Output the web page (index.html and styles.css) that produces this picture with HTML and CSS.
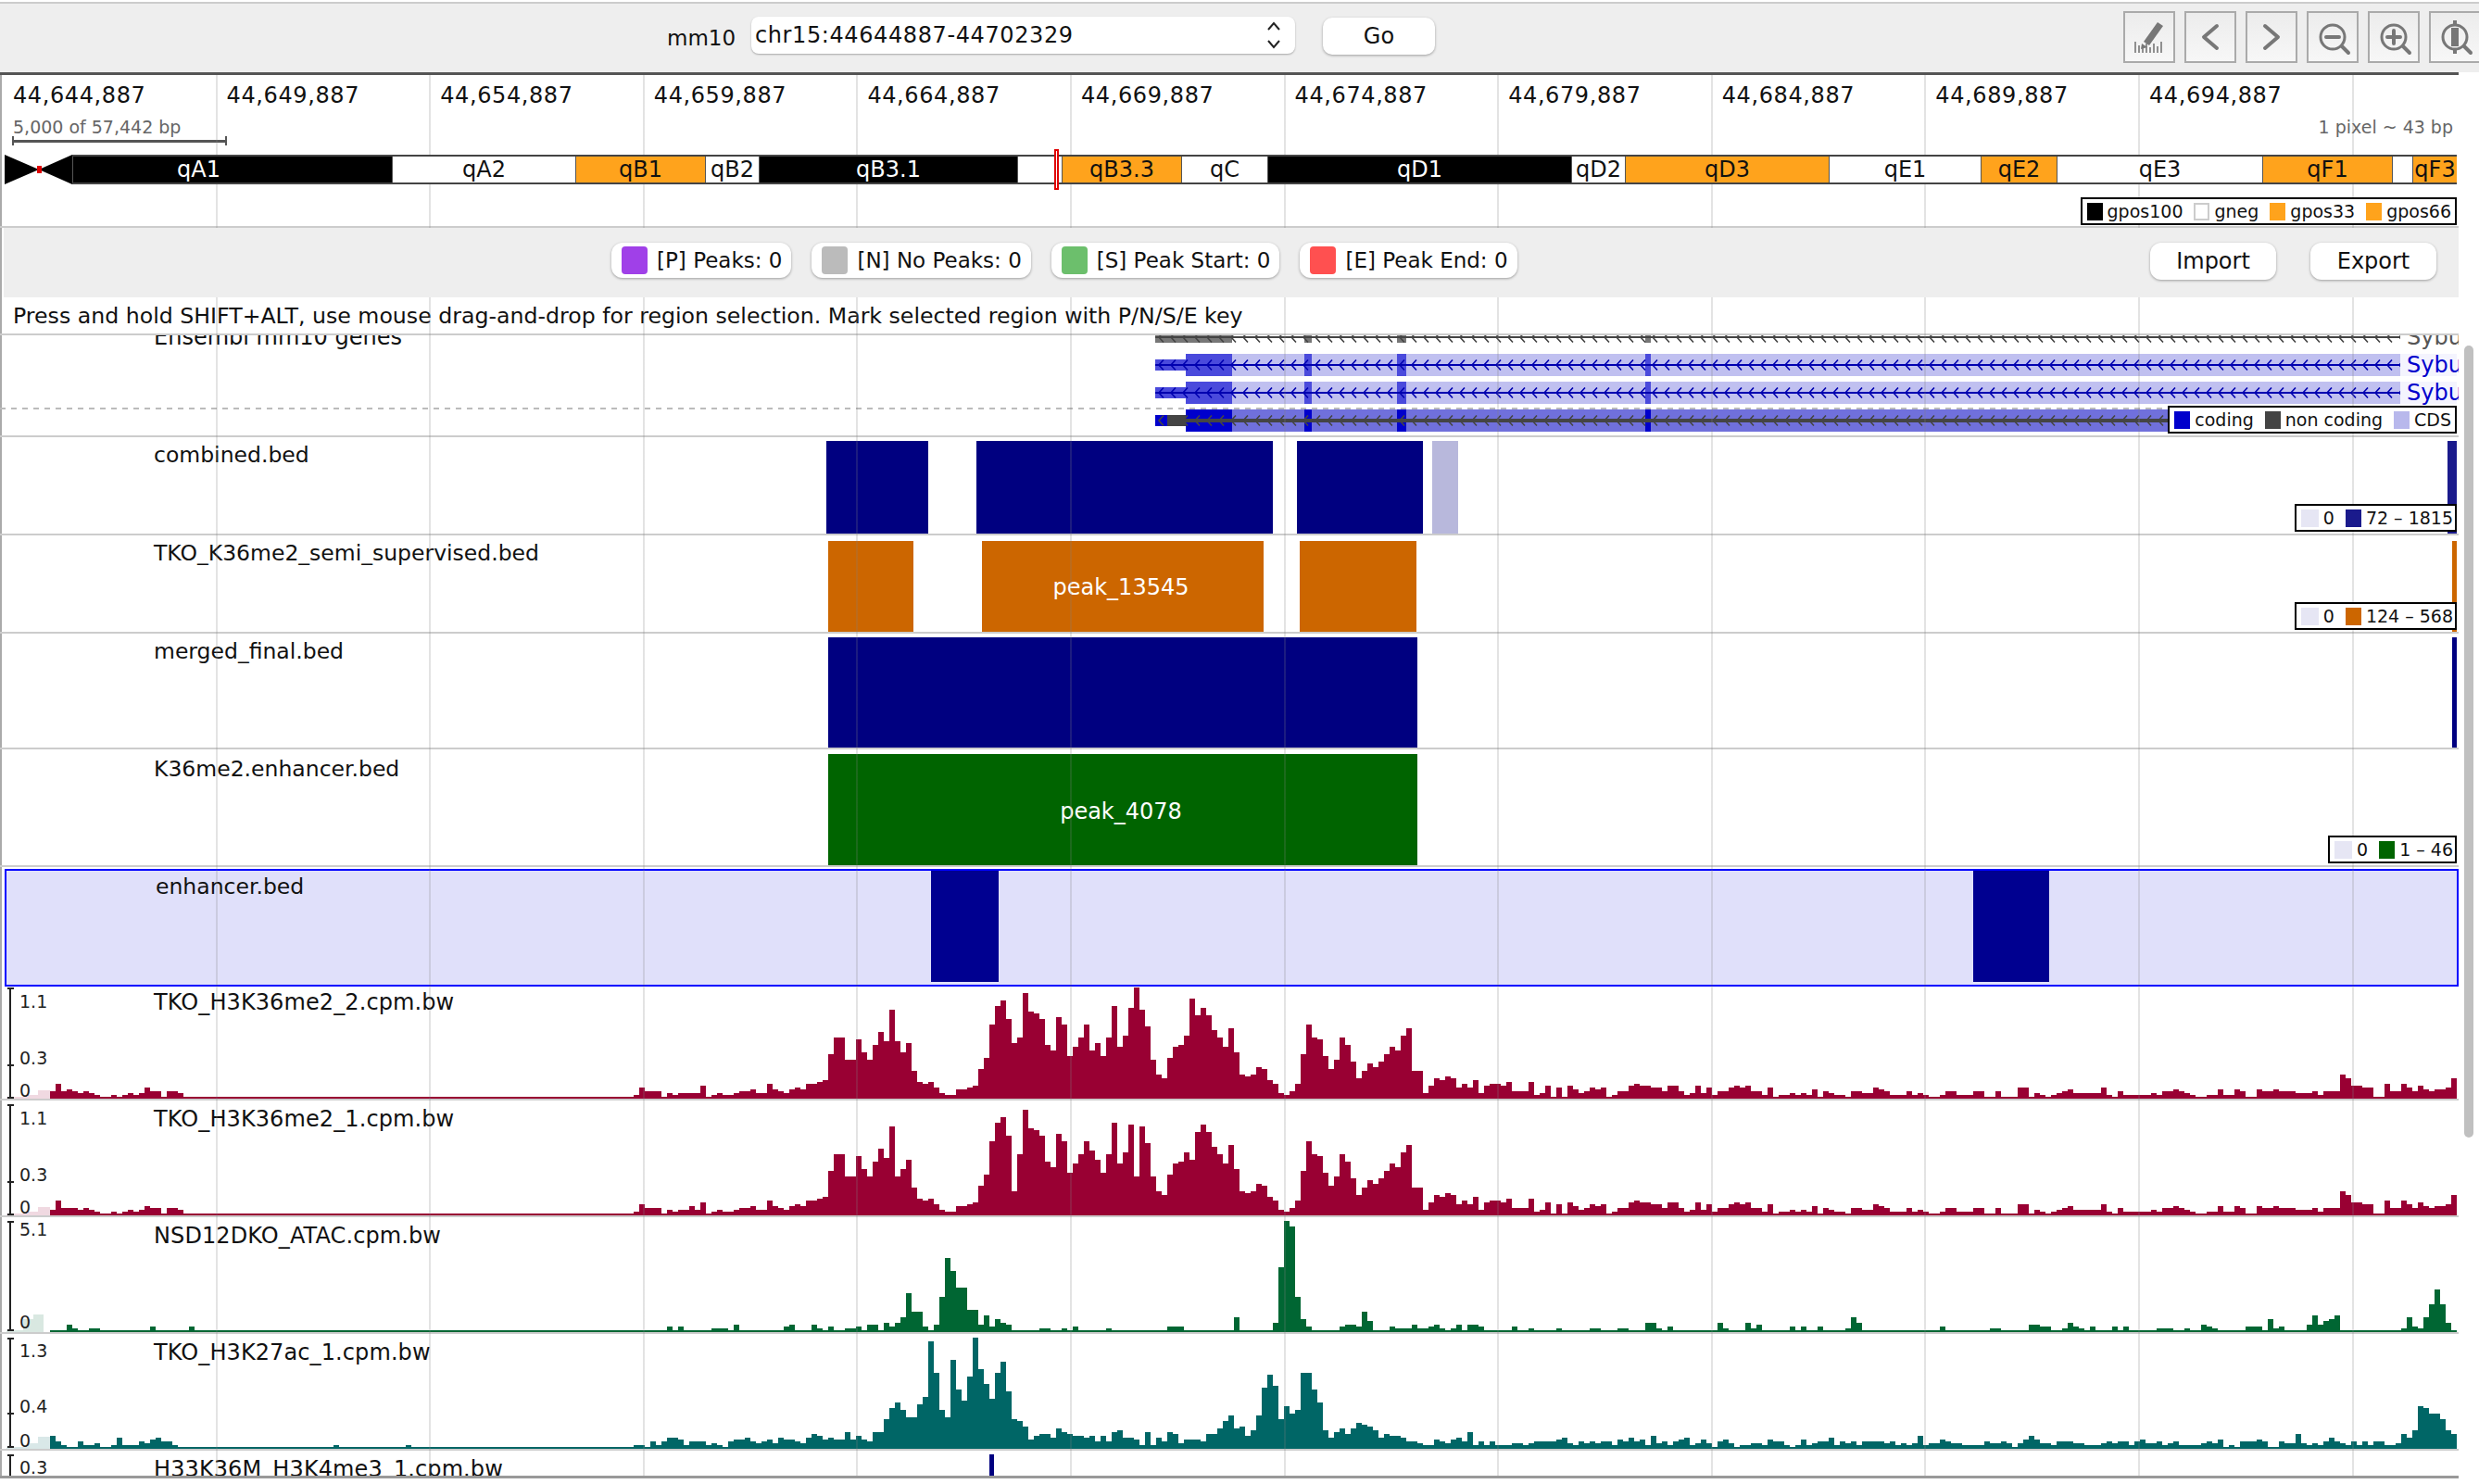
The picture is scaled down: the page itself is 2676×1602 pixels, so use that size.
FILE: index.html
```html
<!DOCTYPE html>
<html lang="en">
<head>
  <meta charset="UTF-8" />
  <title>IGV mm10 chr15</title>
  <link rel="stylesheet" href="styles.css">
</head>
<body>
  <header class="toolbar">
    <span class="genome-name">mm10</span>
    <div class="locus">
      <span>chr15:44644887-44702329</span>
      <svg class="stepper" width="18" height="32" viewBox="0 0 18 32"><path d="M3 10 L9 3 L15 10 M3 22 L9 29 L15 22"/></svg>
    </div>
    <button class="btn go">Go</button>
    <nav class="nav">
      <button class="icon-btn"><svg viewBox="0 0 52 52"><path class="fill" d="M20 31 L35 10 L41 14 L26 35 Z M18 33 L24 37 L17 39 Z"/><path class="thin" d="M11 31 V43 M15 35 V43 M19 36 V43 M23 33 V43 M27 37 V43 M31 33 V43 M35 36 V43 M39 31 V43"/></svg></button>
      <button class="icon-btn"><svg viewBox="0 0 52 52"><path class="line" d="M33 14 L19 26 L33 38"/></svg></button>
      <button class="icon-btn"><svg viewBox="0 0 52 52"><path class="line" d="M19 14 L33 26 L19 38"/></svg></button>
      <button class="icon-btn"><svg viewBox="0 0 52 52"><circle class="ring" cx="26" cy="26" r="13"/><path class="line" d="M19 26 H33 M36 36 L43 43"/></svg></button>
      <button class="icon-btn"><svg viewBox="0 0 52 52"><circle class="ring" cx="26" cy="26" r="13"/><path class="line" d="M19 26 H33 M26 19 V33 M36 36 L43 43"/></svg></button>
      <button class="icon-btn"><svg viewBox="0 0 52 52"><circle class="ring" cx="26" cy="26" r="13"/><path class="line" d="M36 36 L43 43"/><rect class="fill" x="22" y="16" width="8" height="20"/><rect class="fill" x="24" y="8" width="4" height="4"/><rect class="fill" x="24" y="40" width="4" height="4"/></svg></button>
    </nav>
  </header>

  <main class="browser">
    <div class="gridlines"></div>

    <section class="genome">
      <div class="ruler">
        <span>44,644,887</span><span>44,649,887</span><span>44,654,887</span><span>44,659,887</span>
        <span>44,664,887</span><span>44,669,887</span><span>44,674,887</span><span>44,679,887</span>
        <span>44,684,887</span><span>44,689,887</span><span>44,694,887</span>
      </div>
      <div class="scale-row">
        <div class="scale">
          <span>5,000 of 57,442 bp</span>
          <div class="scalebar"></div>
        </div>
        <span>1 pixel ~ 43 bp</span>
      </div>
      <div class="ideogram">
        <svg class="centromere" width="73" height="32" viewBox="0 0 73 32"><path d="M0 0 L37 16 L0 32 Z M73 0 L37 16 L73 32 Z"/><rect class="cen-mark" x="35" y="12" width="5" height="8"/></svg>
        <div class="bands">
          <span class="band black first" style="width:345px">qA1</span>
          <span class="band" style="width:198px">qA2</span>
          <span class="band orange" style="width:140px">qB1</span>
          <span class="band" style="width:58px">qB2</span>
          <span class="band black" style="width:279px">qB3.1</span>
          <span class="band" style="width:48px"></span>
          <span class="band orange" style="width:129px">qB3.3</span>
          <span class="band" style="width:93px">qC</span>
          <span class="band black" style="width:328px">qD1</span>
          <span class="band" style="width:58px">qD2</span>
          <span class="band orange" style="width:220px">qD3</span>
          <span class="band" style="width:164px">qE1</span>
          <span class="band orange" style="width:82px">qE2</span>
          <span class="band" style="width:222px">qE3</span>
          <span class="band orange" style="width:140px">qF1</span>
          <span class="band" style="width:22px"></span>
          <span class="band orange" style="width:48px">qF3</span>
        </div>
        <div class="locator"></div>
      </div>
      <div class="legend legend-ideo">
        <i class="swatch sw-black"></i>gpos100
        <i class="swatch sw-white"></i>gneg
        <i class="swatch sw-orange"></i>gpos33
        <i class="swatch sw-orange"></i>gpos66
      </div>
    </section>

    <section class="marks">
      <button class="btn mark"><i class="dot purple"></i>[P] Peaks: 0</button>
      <button class="btn mark"><i class="dot grey"></i>[N] No Peaks: 0</button>
      <button class="btn mark"><i class="dot green"></i>[S] Peak Start: 0</button>
      <button class="btn mark"><i class="dot red"></i>[E] Peak End: 0</button>
      <button class="btn file import">Import</button>
      <button class="btn file">Export</button>
    </section>

    <div class="hint">Press and hold SHIFT+ALT, use mouse drag-and-drop for region selection. Mark selected region with P/N/S/E key</div>

    <!-- genes -->
    <section class="track genes">
      <div class="track-label gene-label">Ensembl mm10 genes</div>
      <svg width="2654" height="108" viewBox="0 0 2654 108">
        <defs>
          <pattern id="chev-grey" width="13" height="12" y="-6" patternUnits="userSpaceOnUse"><path class="chev" stroke="#444" d="M8 0.5 L3 6 L8 11.5"/></pattern>
          <pattern id="chev-blue" width="13" height="12" y="-6" patternUnits="userSpaceOnUse"><path class="chev" stroke="#0000b0" d="M8 0.5 L3 6 L8 11.5"/></pattern>
        </defs>
        <path class="dashed" d="M0 79 H2340"/>

        <g transform="translate(0,2)" fill="#777">
          <rect x="1247" y="-6" width="83" height="12"/>
          <rect x="1408" y="-6" width="8" height="12"/><rect x="1508" y="-6" width="10" height="12"/><rect x="1776" y="-6" width="6" height="12"/>
          <rect x="1247" y="-1" width="1344" height="2" fill="#444"/>
          <rect x="1247" y="-6" width="1344" height="12" fill="url(#chev-grey)"/>
          <text class="gene-name" x="2598" y="8" fill="#555">Sybu</text>
        </g>

        <g transform="translate(0,32)" fill="#4a4adc">
          <rect x="2591" y="-12" width="61" height="24" fill="#f4f4fe"/>
          <rect x="1330" y="-12" width="1261" height="24" fill="#c0c0f0"/>
          <rect x="1247" y="-6" width="33" height="12"/>
          <rect x="1280" y="-12" width="50" height="24"/>
          <rect x="1408" y="-12" width="8" height="24"/><rect x="1508" y="-12" width="10" height="24"/><rect x="1776" y="-12" width="6" height="24"/>
          <rect x="1247" y="-1" width="1344" height="2" fill="#0000b0"/>
          <rect x="1247" y="-6" width="1344" height="12" fill="url(#chev-blue)"/>
          <text class="gene-name" x="2598" y="8" fill="#0000cc">Sybu</text>
        </g>

        <g transform="translate(0,62)" fill="#4a4adc">
          <rect x="2591" y="-12" width="61" height="24" fill="#f4f4fe"/>
          <rect x="1330" y="-12" width="1261" height="24" fill="#c0c0f0"/>
          <rect x="1247" y="-6" width="33" height="12"/>
          <rect x="1280" y="-12" width="50" height="24"/>
          <rect x="1408" y="-12" width="8" height="24"/><rect x="1508" y="-12" width="10" height="24"/><rect x="1776" y="-12" width="6" height="24"/>
          <rect x="1247" y="-1" width="1344" height="2" fill="#0000b0"/>
          <rect x="1247" y="-6" width="1344" height="12" fill="url(#chev-blue)"/>
          <text class="gene-name" x="2598" y="8" fill="#0000cc">Sybu</text>
        </g>

        <g transform="translate(0,92)" fill="#0000cc">
          <rect x="1330" y="-12" width="1261" height="24" fill="#7070dc"/>
          <rect x="1247" y="-6" width="33" height="12"/>
          <rect x="1260" y="-6" width="20" height="12" fill="#444"/>
          <rect x="1280" y="-12" width="50" height="24"/>
          <rect x="1408" y="-12" width="8" height="24"/><rect x="1508" y="-12" width="10" height="24"/><rect x="1776" y="-12" width="6" height="24"/>
          <rect x="1260" y="-2" width="1331" height="4" fill="#444"/>
          <rect x="1247" y="-6" width="1344" height="12" fill="url(#chev-grey)"/>
        </g>
      </svg>
      <div class="legend legend-gene">
        <i class="swatch sw-coding"></i>coding
        <i class="swatch sw-noncoding"></i>non coding
        <i class="swatch sw-cds"></i>CDS
      </div>
    </section>

    <!-- bed tracks -->
    <section class="track bed combined">
      <div class="track-label">combined.bed</div>
      <svg width="2654" height="104" viewBox="0 0 2654 104" fill="#000080">
        <rect x="892" y="4" width="110" height="100"/>
        <rect x="1054" y="4" width="320" height="100"/>
        <rect x="1400" y="4" width="136" height="100"/>
        <rect x="1546" y="4" width="28" height="100" fill="#b8b8dc"/>
        <rect x="2642" y="4" width="10" height="100" fill="#1a1a8c"/>
      </svg>
      <div class="legend legend-bed">
        <i class="swatch sw-zero"></i>0
        <i class="swatch sw-navy"></i>72 – 1815
      </div>
    </section>

    <section class="track bed semi">
      <div class="track-label">TKO_K36me2_semi_supervised.bed</div>
      <svg width="2654" height="104" viewBox="0 0 2654 104" fill="#cc6600">
        <rect x="894" y="6" width="92" height="98"/>
        <rect x="1060" y="6" width="304" height="98"/>
        <rect x="1403" y="6" width="126" height="98"/>
        <rect x="2647" y="6" width="5" height="98"/>
        <text class="peak-name" x="1210" y="64">peak_13545</text>
      </svg>
      <div class="legend legend-bed">
        <i class="swatch sw-zero"></i>0
        <i class="swatch sw-orange-dark"></i>124 – 568
      </div>
    </section>

    <section class="track bed merged">
      <div class="track-label">merged_final.bed</div>
      <svg width="2654" height="123" viewBox="0 0 2654 123" fill="#000080">
        <rect x="894" y="4" width="636" height="119"/>
        <rect x="2647" y="4" width="5" height="119"/>
      </svg>
    </section>

    <section class="track bed k36-enh">
      <div class="track-label">K36me2.enhancer.bed</div>
      <svg width="2654" height="125" viewBox="0 0 2654 125" fill="#006400">
        <rect x="894" y="5" width="636" height="120"/>
        <text class="peak-name" x="1210" y="75">peak_4078</text>
      </svg>
      <div class="legend legend-bed">
        <i class="swatch sw-zero"></i>0
        <i class="swatch sw-green"></i>1 – 46
      </div>
    </section>

    <section class="track bed enhancer">
      <div class="track-label">enhancer.bed</div>
      <svg width="2649" height="123" viewBox="0 0 2649 123" fill="#000090">
        <rect x="998" y="0" width="73" height="120"/>
        <rect x="2123" y="0" width="82" height="120"/>
      </svg>
    </section>

    <!-- wig tracks, bars are filled in by tracks.js -->
    <section class="track wig">
      <div class="track-label">TKO_H3K36me2_2.cpm.bw</div>
      <svg width="2654" height="120" viewBox="0 0 2654 120">
        <path class="pale c-maroon" d="M41 120 V111 H54 V120 Z M30 120 V116 H41 V120 Z M7 120 V118 H30 V120 Z"/>
        <path class="bars c-maroon" data-track="h3k36_2"/>
        <path class="axis" d="M8 1 H15 M11 1 V119 M8 119 H15 M8 84 H15"/>
        <text class="ticks" x="21" y="22">1.1</text><text class="ticks" x="21" y="83">0.3</text><text class="ticks" x="21" y="118">0</text>
      </svg>
    </section>

    <section class="track wig">
      <div class="track-label">TKO_H3K36me2_1.cpm.bw</div>
      <svg width="2654" height="120" viewBox="0 0 2654 120">
        <path class="pale c-maroon" d="M41 120 V111 H54 V120 Z M30 120 V116 H41 V120 Z M7 120 V118 H30 V120 Z"/>
        <path class="bars c-maroon" data-track="h3k36_1"/>
        <path class="axis" d="M8 1 H15 M11 1 V119 M8 119 H15 M8 84 H15"/>
        <text class="ticks" x="21" y="22">1.1</text><text class="ticks" x="21" y="83">0.3</text><text class="ticks" x="21" y="118">0</text>
      </svg>
    </section>

    <section class="track wig">
      <div class="track-label">NSD12DKO_ATAC.cpm.bw</div>
      <svg width="2654" height="120" viewBox="0 0 2654 120">
        <path class="pale c-green" d="M36 120 V101 H47 V120 Z M25 120 V106 H36 V120 Z M7 120 V118 H25 V120 Z"/>
        <path class="bars c-green" data-track="atac"/>
        <path class="axis" d="M8 1 H15 M11 1 V118 M8 118 H15"/>
        <text class="ticks" x="21" y="16">5.1</text><text class="ticks" x="21" y="116">0</text>
      </svg>
    </section>

    <section class="track wig">
      <div class="track-label">TKO_H3K27ac_1.cpm.bw</div>
      <svg width="2654" height="120" viewBox="0 0 2654 120">
        <path class="pale c-teal" d="M41 120 V107 H54 V120 Z M30 120 V114 H41 V120 Z M7 120 V118 H30 V120 Z"/>
        <path class="bars c-teal" data-track="h3k27"/>
        <path class="axis" d="M8 1 H15 M11 1 V118 M8 118 H15 M8 82 H15"/>
        <text class="ticks" x="21" y="21">1.3</text><text class="ticks" x="21" y="81">0.4</text><text class="ticks" x="21" y="118">0</text>
      </svg>
    </section>

    <section class="track wig last">
      <div class="track-label">H33K36M_H3K4me3_1.cpm.bw</div>
      <svg width="2654" height="23" viewBox="0 0 2654 23">
        <rect x="1068" y="0" width="5" height="23" fill="#000080"/>
        <path class="axis" d="M8 1 H15 M11 1 V23"/>
        <text class="ticks" x="21" y="21">0.3</text>
      </svg>
    </section>
  </main>

  <div class="scrollbar"></div>

  <script src="tracks.js"></script>
</body>
</html>
```

FILE: styles.css
```css
* { margin: 0; padding: 0; box-sizing: border-box; }
html, body { height: 100%; overflow: hidden; }
body {
  font-family: "DejaVu Sans", sans-serif;
  font-size: 24px;
  background-color: #fff;
  color: #111;
  position: relative;
}
button { font-family: inherit; font-size: inherit; color: inherit; border: none; }
svg { display: block; }

/* top bar */
.toolbar {
  margin-top: 2px;
  height: 76px;
  border-top: 2px solid #ccc;
  background-color: #eee;
  display: flex;
  align-items: center;
  overflow: hidden;
}
.genome-name { margin-left: 720px; width: 91px; font-size: 23px; }
.locus {
  width: 587px;
  height: 40px;
  margin-bottom: 6px;
  padding: 0 14px 0 4px;
  background-color: #fff;
  border-radius: 8px;
  box-shadow: 0 1px 2px rgba(0, 0, 0, 0.3);
  display: flex;
  align-items: center;
  justify-content: space-between;
  letter-spacing: 0.6px;
}
.stepper path { fill: none; stroke: #222; stroke-width: 2; }
.btn {
  background-color: #fff;
  border-radius: 10px;
  box-shadow: 0 1px 3px rgba(0, 0, 0, 0.35);
}
.go { width: 121px; height: 40px; margin-left: 30px; margin-bottom: 4px; }
.nav { margin-left: auto; margin-right: -2px; display: flex; gap: 10px; flex-shrink: 0; margin-bottom: 2px; }
.icon-btn {
  width: 56px;
  height: 56px;
  border: 2px solid #aaa;
  background: linear-gradient(#ececec, #f7f7f7);
  flex-shrink: 0;
}
.icon-btn svg { width: 52px; height: 52px; }
.icon-btn .fill { fill: #777; }
.icon-btn .thin { fill: none; stroke: #777; stroke-width: 1.6; }
.icon-btn .line { fill: none; stroke: #777; stroke-width: 4; stroke-linecap: round; stroke-linejoin: round; }
.icon-btn .ring { fill: none; stroke: #777; stroke-width: 3; }

/* main panel */
.browser {
  position: relative;
  width: 2654px;
  height: 1518px;
  border-top: 3px solid #555;
  border-bottom: 3px solid #999;
  box-shadow: inset 2px 0 #aaa;
  overflow: hidden;
}
.gridlines {
  position: absolute;
  top: 0;
  bottom: 0;
  left: 4px;
  right: 0;
  z-index: 1;
  pointer-events: none;
  background-image: repeating-linear-gradient(to right,
    transparent 0, transparent 228.6px,
    rgba(128, 128, 128, 0.22) 228.6px, rgba(128, 128, 128, 0.22) 230.6px);
}

.genome { height: 165px; position: relative; border-bottom: 2px solid #ccc; }
.ruler { display: flex; padding: 8px 0 0 14px; line-height: 28px; letter-spacing: 0.6px; }
.ruler span { width: 230.6px; flex-shrink: 0; }
.scale-row {
  display: flex;
  justify-content: space-between;
  padding: 8px 6px 0 14px;
  font-size: 19px;
  line-height: 24px;
  color: #666;
}
.scalebar {
  width: 232px;
  height: 10px;
  margin: -2px 0 0 -1px;
  border-left: 2px solid #555;
  border-right: 2px solid #555;
  background: linear-gradient(#555, #555) center / 100% 3px no-repeat;
}
.ideogram {
  position: relative;
  z-index: 2;
  display: flex;
  height: 32px;
  margin: 10px 0 0 5px;
  width: 2647px;
}
.centromere { flex-shrink: 0; }
.centromere path { fill: #000; }
.cen-mark { fill: #e00000; }
.bands {
  flex: 1;
  display: flex;
  border-top: 2px solid #444;
  border-bottom: 2px solid #444;
  overflow: hidden;
}
.band {
  flex-shrink: 0;
  text-align: center;
  line-height: 28px;
  background-color: #fff;
  border-left: 1px solid #555;
  overflow: hidden;
  white-space: nowrap;
}
.band.black { background-color: #000; color: #fff; }
.band.orange { background-color: #ffa31c; }
.band.first { padding-right: 73px; }
.locator {
  position: absolute;
  left: 1133px;
  top: -6px;
  width: 5px;
  height: 44px;
  border: 2px solid #e00000;
  background-color: #fff;
}

.legend {
  position: absolute;
  z-index: 2;
  right: 2px;
  display: flex;
  align-items: center;
  gap: 5px;
  height: 30px;
  padding: 0 4px 0 5px;
  background-color: #fff;
  border: 2px solid #000;
  font-size: 19px;
  white-space: nowrap;
}
.legend-ideo { bottom: 1px; }
.legend-gene { bottom: 2px; }
.legend-bed { bottom: 2px; padding-right: 2px; }
.swatch { display: block; width: 17px; height: 19px; margin-left: 7px; flex-shrink: 0; }
.sw-black, .sw-coding, .legend-bed .sw-zero { margin-left: 0; }
.sw-black { background-color: #000; }
.sw-white { background-color: #fff; border: 2px solid #ccc; }
.sw-orange { background-color: #ffa31c; }
.sw-coding { background-color: #0000cc; }
.sw-noncoding { background-color: #444; }
.sw-cds { background-color: #b8b8ec; }
.sw-zero { background-color: #e6e6f4; width: 19px; }
.sw-navy { background-color: #1a1a8c; }
.sw-orange-dark { background-color: #cc6600; }
.sw-green { background-color: #006400; }

/* peak buttons */
.marks {
  position: relative;
  z-index: 2;
  height: 75px;
  margin-left: 4px;
  padding: 16px 24px 0 656px;
  background-color: #eee;
  display: flex;
  align-items: flex-start;
  gap: 22px;
  font-size: 23px;
}
.mark {
  height: 38px;
  padding: 0 10px 0 11px;
  display: flex;
  align-items: center;
  gap: 10px;
  border-radius: 12px;
  white-space: nowrap;
}
.dot { display: block; width: 28px; height: 30px; border-radius: 4px; }
.purple { background-color: #a040e8; }
.grey { background-color: #bbb; }
.green { background-color: #6cbf6c; }
.red { background-color: #ff5050; }
.file { width: 136px; height: 40px; border-radius: 12px; font-size: 24px; }
.import { margin-left: auto; margin-right: 15px; }

.hint {
  height: 41px;
  line-height: 41px;
  padding-left: 14px;
  border-bottom: 2px solid #ccc;
  white-space: nowrap;
  font-size: 23.65px;
}

/* tracks */
.track { position: relative; overflow: hidden; border-bottom: 2px solid #ccc; }
.track-label { position: absolute; left: 166px; top: 5px; line-height: 28px; white-space: nowrap; }
.bed .track-label { font-size: 23.5px; }
.gene-label { top: -12px; }
.gene-name { font-size: 24px; }
.chev { fill: none; stroke-width: 1.6; }
.dashed { fill: none; stroke: #bbb; stroke-width: 2; stroke-dasharray: 6 6; }
.peak-name { fill: #fff; font-size: 24px; text-anchor: middle; }
.k36-enh { height: 127px; }
.k36-enh .track-label { top: 7px; }
.enhancer {
  height: 127px;
  margin: 2px 0 0 5px;
  width: 2649px;
  border: 2px solid #0000ff;
  background-color: #e0e0fa;
}
.enhancer .track-label { left: 161px; top: 3px; }
.enhancer + .wig { margin-top: 1px; }
.wig + .wig { margin-top: 4px; }
.wig .track-label { top: 2px; letter-spacing: 0.1px; }
.wig.last { border-bottom: none; height: 23px; }
.axis { fill: none; stroke: #222; stroke-width: 2; }
.ticks { font-size: 19px; fill: #222; }
.c-maroon { fill: #990033; }
.c-green { fill: #006633; }
.c-teal { fill: #006666; }
.pale { opacity: 0.15; }

.scrollbar {
  position: absolute;
  left: 2660px;
  top: 373px;
  width: 10px;
  height: 855px;
  border-radius: 5px;
  background-color: #c0c0c0;
}
```

FILE: tracks.js
```js
// wig signal per 6px bin, in pixels. first bin sits at x=54
const flat = (n) => Array(n).fill(2);

const h3k36_2 = [
  8,16,8,10,8,6,8,6,4,2,2,4,2,4,6,4,6,12,8,8,2,8,8,6,2,
  ...flat(80),
  4,12,8,8,8,2,6,4,6,6,6,6,14,2,4,6,4,4,6,8,8,10,6,6,16,10,8,6,10,12,10,16,16,18,20,
  48,66,66,42,42,64,50,42,58,72,62,96,62,50,60,30,18,16,18,12,6,4,4,10,10,12,14,32,44,
  80,100,106,86,60,66,114,94,92,86,58,52,88,80,46,56,66,80,52,60,46,66,100,56,68,98,120,96,78,
  42,26,22,44,56,58,68,108,90,98,90,74,66,56,76,50,
  26,24,26,34,32,20,16,6,4,8,16,48,80,66,64,46,32,42,66,58,40,22,30,38,34,40,48,56,52,68,76,30,30,
  6,14,22,20,24,22,12,16,12,20,6,14,16,16,14,18,8,8,8,18,4,6,14,2,12,2,14,10,6,8,12,10,12,2,4,8,8,
  14,16,14,14,12,12,8,14,14,8,4,6,14,6,12,4,8,8,12,14,12,14,8,8,4,12,2,4,4,6,4,6,4,10,2,8,6,4,4,2,
  8,8,6,6,12,10,8,4,4,4,8,4,6,4,2,2,4,8,8,4,4,4,8,8,2,2,8,2,2,2,12,12,2,6,4,2,4,6,8,10,6,6,6,6,6,
  12,4,2,8,4,4,4,4,4,6,4,8,8,10,8,6,4,2,2,4,4,10,4,4,10,8,2,2,10,8,8,10,8,8,8,6,6,6,8,4,8,8,8,
  26,22,14,14,12,12,2,2,16,8,8,16,12,8,14,10,8,10,10,12,22,18
];

// second replicate is almost the same, a few bins differ
const h3k36_1 = h3k36_2.slice();
Object.entries({ 0: 6, 3: 8, 17: 10, 115: 10, 152: 42, 173: 26, 187: 70, 195: 42, 205: 60 })
  .forEach(([i, h]) => { h3k36_1[i] = h; });

// sparse: only the bins above the baseline
const atac = flat(433);
const atacPeaks = {
  3:8,4:4,7:4,8:4,18:6,25:6,111:6,113:6,119:4,120:4,121:4,123:8,132:6,133:8,137:8,138:4,140:6,143:4,144:4,145:6,
  147:8,148:8,150:10,151:6,152:10,153:16,154:42,155:22,156:22,157:6,159:8,160:38,161:80,162:66,163:48,164:48,
  165:24,166:24,167:8,168:18,169:6,170:14,171:10,172:8,173:2,178:4,179:4,182:4,184:6,190:4,201:6,202:6,203:6,213:16,
  220:10,221:70,222:120,223:114,224:38,225:14,226:6,232:6,233:8,234:8,235:6,236:22,237:12,241:6,242:4,243:4,244:4,
  245:8,246:4,247:4,248:6,249:8,250:4,252:4,253:8,255:8,256:8,257:6,263:6,266:4,271:4,277:4,278:4,282:4,283:4,
  287:10,288:10,289:4,291:6,300:10,301:4,305:10,306:4,307:8,313:6,315:6,318:6,323:4,324:16,325:10,340:6,349:4,350:4,
  356:8,357:8,358:6,359:6,362:4,363:10,364:6,365:4,367:6,371:6,373:6,379:4,380:4,381:4,384:4,387:8,388:6,389:4,
  395:6,396:6,397:6,399:14,400:4,401:6,406:8,407:18,408:8,409:12,410:14,411:18,423:4,424:16,425:6,426:4,427:16,
  428:30,429:46,430:30,431:10
};
Object.entries(atacPeaks).forEach(([i, h]) => { atac[i] = h; });

const h3k27 = [
  14,8,4,2,2,8,4,4,6,2,2,4,12,4,4,4,8,6,10,12,8,8,4,2,
  ...flat(27),4,...flat(12),4,...flat(40),
  4,4,2,8,4,8,12,12,10,4,8,8,8,4,6,4,2,8,10,10,12,8,6,8,10,6,12,10,10,8,6,12,16,14,10,12,10,10,18,10,14,10,8,18,18,
  32,44,50,42,34,34,48,56,116,82,42,34,96,64,52,78,120,86,70,54,82,94,62,32,30,24,10,14,16,16,12,22,18,16,14,14,12,14,8,
  14,8,18,20,12,12,10,4,18,4,12,8,18,16,6,10,10,10,8,16,16,22,30,36,22,
  24,14,20,36,66,80,68,32,46,38,42,82,82,64,50,20,12,18,22,16,22,28,26,24,20,12,16,14,14,12,8,8,6,4,4,10,8,6,10,12,8,18,
  4,8,4,8,4,4,4,6,6,4,6,8,8,8,8,10,12,6,4,8,6,8,6,8,8,4,10,8,12,8,10,4,14,6,8,4,8,10,12,4,6,10,6,2,8,10,6,2,4,4,6,6,4,
  10,8,8,4,2,4,10,4,6,8,8,12,4,8,6,8,4,8,8,8,8,6,8,4,6,4,6,14,4,6,6,10,8,6,6,4,4,4,4,8,6,6,8,6,2,6,10,14,10,6,6,4,8,8,8,
  6,6,4,4,4,6,8,6,8,8,4,8,10,6,6,8,4,6,8,4,4,4,4,6,8,6,10,2,4,2,8,8,8,10,8,2,2,8,6,6,16,6,4,6,4,8,12,8,6,4,8,4,8,4,8,8,
  4,4,6,16,12,20,46,44,38,38,32,20,16,18
];

const signals = { h3k36_2, h3k36_1, atac, h3k27 };

document.querySelectorAll('.bars').forEach(path => {
  const heights = signals[path.dataset.track];
  let d = '';
  heights.forEach((h, i) => {
    const x = 54 + i * 6;
    if (x >= 2652) return;
    d += `M${x} 120V${120 - h}H${Math.min(x + 6, 2652)}V120Z`;
  });
  path.setAttribute('d', d);
});
```
